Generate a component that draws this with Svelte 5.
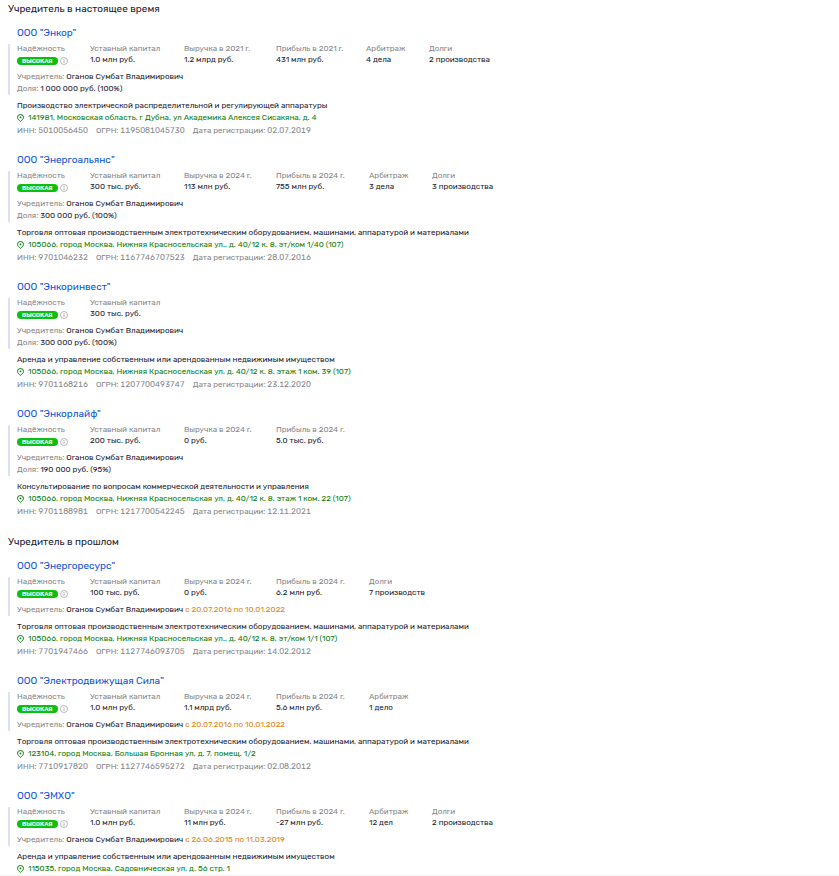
<script>
  const founder = 'Оганов Сумбат Владимирович';
  const trade = 'Торговля оптовая производственным электротехническим оборудованием, машинами, аппаратурой и материалами';
  const rent = 'Аренда и управление собственным или арендованным недвижимым имуществом';

  const money = (year, revenue, profit) => [
    { label: `Выручка в ${year} г.`, value: revenue },
    { label: `Прибыль в ${year} г.`, value: profit }
  ];
  const courts = (value) => ({ label: 'Арбитраж', value, kind: 'courts' });
  const debts = (value) => ({ label: 'Долги', value });

  const sections = [
    {
      title: 'Учредитель в настоящее время',
      companies: [
        { name: 'ООО "Энкор"', capital: '1,0 млн руб.', compact: true,
          stats: [...money(2021, '1,2 млрд руб.', '431 млн руб.'), courts('4 дела'), debts('2 производства')],
          share: '1 000 000 руб. (100%)',
          activity: 'Производство электрической распределительной и регулирующей аппаратуры',
          address: '141981, Московская область, г Дубна, ул Академика Алексея Сисакяна, д. 4',
          inn: '5010056450', ogrn: '1195081045730', date: '02.07.2019' },
        { name: 'ООО "Энергоальянс"', capital: '300 тыс. руб.',
          stats: [...money(2024, '113 млн руб.', '755 млн руб.'), courts('3 дела'), debts('3 производства')],
          share: '300 000 руб. (100%)', activity: trade,
          address: '105066, город Москва, Нижняя Красносельская ул., д. 40/12 к. 8, эт/ком 1/40 (107)',
          inn: '9701046232', ogrn: '1167746707523', date: '28.07.2016' },
        { name: 'ООО "Энкоринвест"', capital: '300 тыс. руб.', stats: [],
          share: '300 000 руб. (100%)', activity: rent,
          address: '105066, город Москва, Нижняя Красносельская ул, д. 40/12 к. 8, этаж 1 ком. 39 (107)',
          inn: '9701168216', ogrn: '1207700493747', date: '23.12.2020' },
        { name: 'ООО "Энкорлайф"', capital: '200 тыс. руб.',
          stats: money(2024, '0 руб.', '5,0 тыс. руб.'),
          share: '190 000 руб. (95%)',
          activity: 'Консультирование по вопросам коммерческой деятельности и управления',
          address: '105066, город Москва, Нижняя Красносельская ул, д. 40/12 к. 8, этаж 1 ком. 22 (107)',
          inn: '9701188981', ogrn: '1217700542245', date: '12.11.2021' }
      ]
    },
    {
      title: 'Учредитель в прошлом',
      companies: [
        { name: 'ООО "Энергоресурс"', capital: '100 тыс. руб.',
          stats: [...money(2024, '0 руб.', '6,2 млн руб.'), debts('7 производств')],
          period: 'с 20.07.2016 по 10.01.2022', activity: trade,
          address: '105066, город Москва, Нижняя Красносельская ул., д. 40/12 к. 8, эт/ком 1/1 (107)',
          inn: '7701947466', ogrn: '1127746093705', date: '14.02.2012' },
        { name: 'ООО "Электродвижущая Сила"', capital: '1,0 млн руб.',
          stats: [...money(2024, '1,1 млрд руб.', '5,6 млн руб.'), courts('1 дело')],
          period: 'с 20.07.2016 по 10.01.2022', activity: trade,
          address: '123104, город Москва, Большая Бронная ул, д. 7, помещ. 1/2',
          inn: '7710917820', ogrn: '1127746595272', date: '02.08.2012' },
        { name: 'ООО "ЭМХО"', capital: '1,0 млн руб.',
          stats: [...money(2024, '11 млн руб.', '-27 млн руб.'), courts('12 дел'), debts('2 производства')],
          period: 'с 26.06.2015 по 11.03.2019', activity: rent,
          address: '115035, город Москва, Садовническая ул, д. 56 стр. 1' }
      ]
    }
  ];
</script>

<main>
  {#each sections as section}
    <section>
      <h2>{section.title}</h2>
      <div class="list">
        {#each section.companies as c}
          <article>
            <h3><a href="#company">{c.name}</a></h3>
            <div class="facts">
              <dl class:compact={c.compact}>
                <div class="stat reliability">
                  <dt>Надёжность</dt>
                  <dd>
                    <span class="badge">ВЫСОКАЯ</span>
                    <button type="button" aria-label="Подробнее о надёжности">
                      <svg viewBox="0 0 8 8" width="8" height="8" fill="none" stroke="#999">
                        <circle cx="4" cy="4" r="3.5" stroke-width=".7" />
                        <path d="M4 3.5v2.4M4 2v.8" stroke-width=".9" />
                      </svg>
                    </button>
                  </dd>
                </div>
                <div class="stat capital"><dt>Уставный капитал</dt><dd>{c.capital}</dd></div>
                {#each c.stats as s, i}
                  <div class="stat {s.kind ?? ''}" class:revenue={i === 0} class:profit={i === 1}>
                    <dt>{s.label}</dt><dd>{s.value}</dd>
                  </div>
                {/each}
              </dl>
              <p><span class="muted">Учредитель:</span> {founder}{#if c.period}{' '}<span class="period">{c.period}</span>{/if}</p>
              {#if c.share}<p><span class="muted">Доля:</span> {c.share}</p>{/if}
            </div>
            <p class="activity">{c.activity}</p>
            <address>
              <svg viewBox="0 0 7 8" width="7" height="8" fill="none" stroke="#087b0b">
                <path d="M3.5 7.4C2.4 6.2.5 5.3.5 3.4a3 2.9 0 0 1 6 0C6.5 5.3 4.6 6.2 3.5 7.4Z" stroke-width="1" />
                <circle cx="3.5" cy="3.4" r=".9" fill="#087b0b" stroke="none" />
              </svg>
              {c.address}
            </address>
            {#if c.inn}
              <div class="ids muted">
                <span>ИНН: {c.inn}</span><span>ОГРН: {c.ogrn}</span><span>Дата регистрации: {c.date}</span>
              </div>
            {/if}
          </article>
        {/each}
      </div>
    </section>
  {/each}
</main>

<style>
  :global(body) { margin: 0; background: #fff; }
  main {
    display: flex;
    flex-direction: column;
    gap: 16px;
    padding: 1px 8px 0;
    border-bottom: 1px solid #f4f4f6;
    font: 8px/12px Rubik, Inter, "Liberation Sans", sans-serif;
    color: #1b1b2f;
  }
  h2, h3, p, dl, dd { margin: 0; }
  h2 { font-size: 10px; line-height: 16px; font-weight: 400; }
  h3 { font-size: 10px; line-height: 16px; font-weight: 400; padding-bottom: 3px; }
  a { color: #0b54dc; text-decoration: none; }
  a:hover { text-decoration: underline; }
  .list { display: flex; flex-direction: column; gap: 15px; padding-top: 8px; }
  article { padding-left: 9px; }
  .facts {
    margin-left: -9px;
    padding-left: 7px;
    border-left: 2px solid #d9dffc;
    border-radius: 1px;
  }
  dl { display: flex; padding-bottom: 5px; }
  dt { padding-bottom: 1px; line-height: 9px; color: #85858a; white-space: nowrap; }
  dd { white-space: nowrap; }
  .reliability { width: 73px; }
  .capital { width: 94px; }
  .revenue { width: 92px; }
  .profit { width: 93px; }
  .courts { width: 63px; }
  .compact .profit { width: 90px; }
  .reliability dd { display: flex; align-items: center; gap: 2px; padding-top: 2px; height: 10px; }
  .badge {
    padding: 0 5px;
    border-radius: 4px;
    background: #0dc010;
    color: #fff;
    font-size: 6px;
    line-height: 8px;
    font-weight: 600;
  }
  button { display: flex; padding: 0; border: 0; background: none; }
  .muted { color: #85858a; }
  .period { color: #e08414; }
  .activity { padding-top: 5px; }
  address { display: flex; align-items: center; gap: 4px; font-style: normal; color: #087b0b; }
  .ids { display: flex; gap: 8px; padding-top: 1px; font-variant-numeric: tabular-nums; }
</style>
